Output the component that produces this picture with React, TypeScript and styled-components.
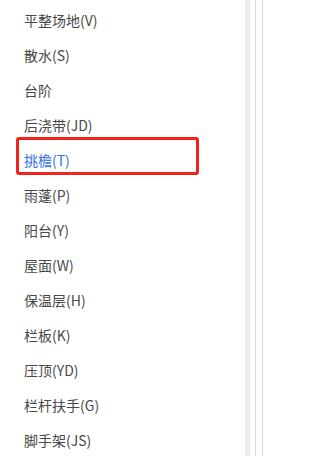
import styled, { createGlobalStyle } from "styled-components";

const GlobalStyle = createGlobalStyle`
  html, body {
    margin: 0;
    padding: 0;
    background: #ffffff;
  }
  body {
    font-family: "Noto Sans CJK SC", "Noto Sans", sans-serif;
  }
`;

const Page = styled.div`
  display: flex;
  width: 281px;
  height: 456px;
  overflow: hidden;
  background: #ffffff;
`;

const MenuList = styled.ul`
  list-style: none;
  margin: 0;
  padding: 3px 0 0 0;
  width: 245px;
  flex: none;
`;

const MenuItem = styled.li<{ $active?: boolean }>`
  position: relative;
  height: 35px;
  line-height: 35px;
  padding-left: 24px;
  font-size: 14px;
  color: ${(props) => (props.$active ? "#2f6fea" : "#484848")};
  white-space: nowrap;
`;

const Highlight = styled.span`
  position: absolute;
  left: 16px;
  top: -6px;
  width: 183px;
  height: 38px;
  box-sizing: border-box;
  border: 3px solid #f2231c;
  border-radius: 3px;
`;

const ScrollTrack = styled.div`
  width: 5px;
  flex: none;
  background: #ececec;
`;

const Divider = styled.div<{ $gap: number }>`
  width: 1px;
  flex: none;
  margin-left: ${(props) => props.$gap}px;
  background: #dcdcdc;
`;

const items = [
  "平整场地(V)",
  "散水(S)",
  "台阶",
  "后浇带(JD)",
  "挑檐(T)",
  "雨蓬(P)",
  "阳台(Y)",
  "屋面(W)",
  "保温层(H)",
  "栏板(K)",
  "压顶(YD)",
  "栏杆扶手(G)",
  "脚手架(JS)",
];

function App() {
  const activeIndex = 4;
  return (
    <>
      <GlobalStyle />
      <Page>
        <MenuList>
          {items.map((item, i) => (
            <MenuItem key={item} $active={i === activeIndex}>
              {i === activeIndex && <Highlight />}
              {item}
            </MenuItem>
          ))}
        </MenuList>
        <ScrollTrack />
        <Divider $gap={5} />
        <Divider $gap={6} />
      </Page>
    </>
  );
}

export default App;
